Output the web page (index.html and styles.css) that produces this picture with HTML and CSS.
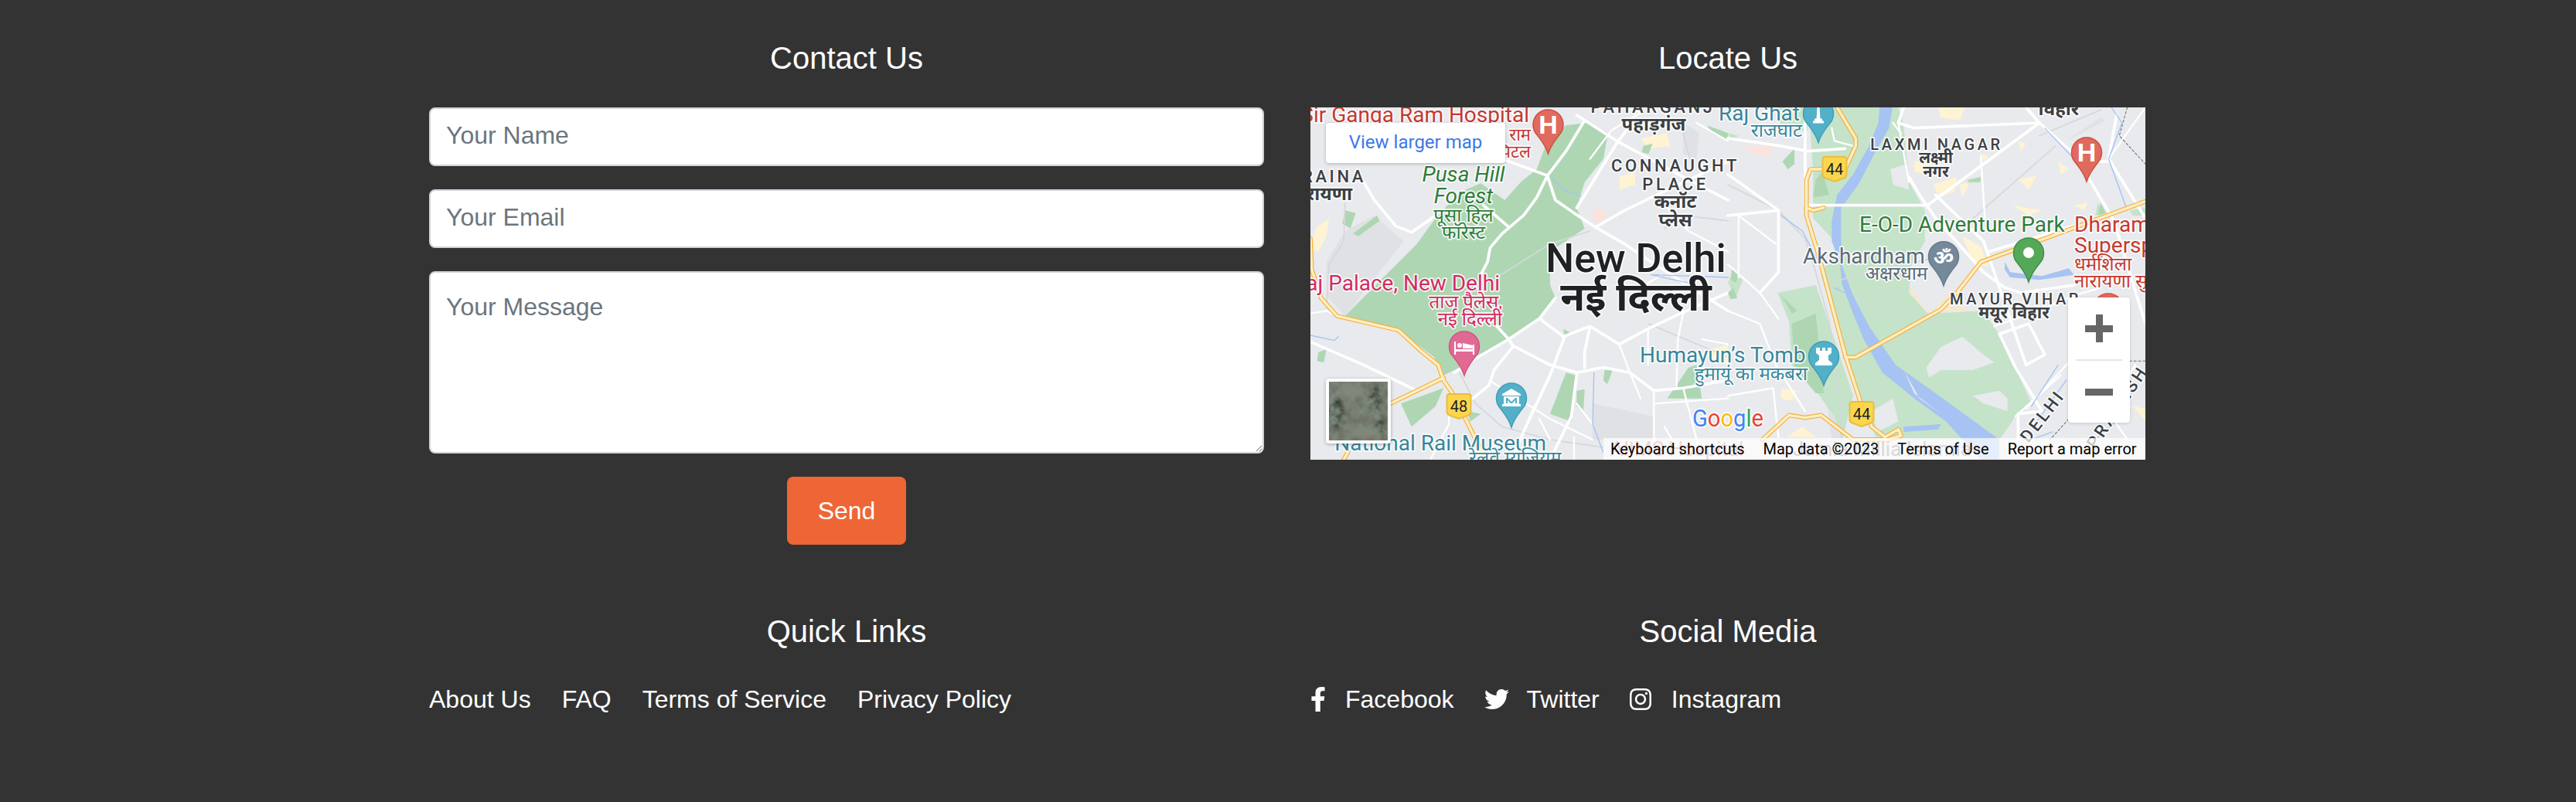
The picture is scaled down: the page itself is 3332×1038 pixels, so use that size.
FILE: index.html
```html
<!DOCTYPE html>
<html>
	<head>
		<meta charset="UTF-8">
		<title>Contact</title>
		<link rel="stylesheet" href="styles.css">
	</head>
	<body>
		<footer class="foot">
			<section class="col">
				<h3>Contact Us</h3>
				<form class="form">
					<input type="text" placeholder="Your Name">
					<input type="email" placeholder="Your Email">
					<textarea placeholder="Your Message"></textarea>
					<button type="button">Send</button>
				</form>
			</section>
			<section class="col">
				<h3>Locate Us</h3>
				<div class="map">
					<svg class="map-art" viewBox="0 0 1080 456" width="1080" height="456">
						<defs>
							<path id="pin" d="M0 38C-3 28-8 22-14 14A19.5 19.5 0 1 1 14 14C8 22 3 28 0 38Z"/>
							<path id="shield" d="M-12-16H12Q15.5-16 15.5-12V7Q15.5 10 12 11.5L0 16-12 11.5Q-15.5 10-15.5 7V-12Q-15.5-16-12-16Z"/>
						</defs>
						<rect class="land" width="1080" height="456"/>

						<!-- left half, coordinates read off the 540px wide crop -->
						<g transform="scale(.3444 .3333)">
							<path class="patch" d="M20 470L70 430 60 500 30 560 0 540ZM130 470L170 490 150 510ZM1160 270L1220 250 1220 300 1160 320ZM1240 120L1340 100 1350 150 1270 160ZM1500 940L1568 920 1568 1000 1500 980Z"/>
							<path class="shade" d="M60 600L130 480 240 420 350 520 130 810 60 730ZM1060 1150L1290 1200 1290 1290 1060 1290ZM1400 60L1460 100 1450 200 1400 180Z"/>
							<path class="pink" d="M1050 410L1085 385 1120 425 1075 450Z"/>
							<path class="park" d="M130 810L400 530 470 430 560 330 640 295 730 360 790 290 850 240 890 130 960 70 1040 60 1118 100 1100 200 1030 290 1000 390 1030 470 900 560 900 690 920 740 860 820 740 900 620 980 500 1040 465 970 330 865Z"/>
							<path class="park" d="M130 400L170 410 150 470 120 450ZM160 490L250 420 260 440 180 500ZM30 950L60 940 50 990 25 985ZM340 1150L500 1090 470 1160 380 1240ZM590 1180L640 1190 600 1220ZM950 860L985 880 955 890ZM960 1030L998 1040 980 1220 900 1190ZM1000 1100L1030 1095 1025 1180 1000 1160ZM1105 1020L1135 1020 1115 1075 1100 1060ZM1340 1130L1420 1010 1450 1000 1470 1130ZM1250 150L1285 140 1270 180 1245 175ZM1490 70L1568 100 1568 130 1510 100Z"/>
							<path class="rail" d="M700 660L900 530 1050 480M130 370L125 520 70 610 60 780M560 1030L620 1150 720 1240 900 1290 1100 1320M1270 840L1568 970M1330 470L1400 420 1568 440M1400 100L1430 220"/>
							<path class="road" d="M1030 50L960 170 890 265 850 350 800 420 720 490 675 545 665 600 640 650M890 265L920 360 990 410 1070 465 1180 530 1280 600 1400 680 1568 790M1070 465L1180 400 1300 340 1568 210M1000 390L1150 140 1200 70M1000 30L1150 130 1400 270 1568 360M920 740L860 820 745 900 620 975 540 1030M860 820L950 890 1050 850 1160 920 1268 860 1390 800 1568 720M745 900L760 925 900 1000 1000 1030 1100 1010 1200 1030 1290 1100 1400 1090 1568 1060M760 930L690 1020 670 1080 610 1130M955 890L900 1040 800 1260 760 1368M1000 1040L980 1200 900 1368M1050 850L1030 950 1030 1010M0 910L200 1000 400 1100M890 265L720 200 560 120M470 420L380 485 320 460 240 360 200 290M650 380L740 460M700 850L745 900"/>
							<path class="road thin" d="M0 800L60 790 100 810M680 1065L780 1130 900 1210 1060 1290M1160 920L1200 1030 1240 1130M1290 1100L1290 1368M1268 860L1268 1000M1400 800L1380 900 1375 1090M1470 900L1568 920M840 1160L800 1260M860 1210L900 1290M990 1280L990 1368 M1060 1230L1000 1150M1130 90L1240 20M1240 20L1190 0M1300 340L1420 480 1568 560M1320 650L1240 700M1400 1090L1470 1368M1290 1150L1568 1130M1130 90L1050 200M1450 60L1568 130M450 1368L520 1230 520 1170M1330 1240L1400 1368"/>
							<path class="brook" d="M1065 1030L1060 1230 1100 1340M0 885L90 905 105 890M1570 660L1280 650 1500 700M905 275L950 320 1015 345"/>
							<path class="hw-edge" d="M0 510L5 630 40 740 100 810 330 865 420 950 480 1000 500 1060 540 1120 640 1330 660 1368M500 1050L300 1150M140 1340L125 1368"/>
							<path class="hw" d="M0 510L5 630 40 740 100 810 330 865 420 950 480 1000 500 1060 540 1120 640 1330 660 1368M500 1050L300 1150M140 1340L125 1368"/>
						</g>

						<!-- right half -->
						<g transform="translate(540) scale(.3444 .3333)">
							<path class="patch" d="M790 0L890 0 870 50 800 40ZM700 210L760 220 740 260 700 250ZM770 300L860 270 850 330 790 340ZM870 300L910 290 880 350ZM950 180L980 190 960 210ZM1090 130L1120 140 1100 170ZM1240 210L1280 240 1250 260ZM1090 280L1160 265 1130 320ZM1070 380L1180 400 1130 420ZM1300 380L1350 370 1340 400ZM880 500L950 540 980 620 920 600ZM200 1090L260 1100 240 1140 200 1130ZM1520 1160L1568 1170 1568 1220ZM220 1280L280 1240 330 1280Z"/>
							<path class="sand" d="M680 690L760 800 900 790 830 720 750 810 690 750Z"/>
							<path class="pink" d="M60 150L170 145 160 190 90 180Z"/>
							<path class="shade" d="M1240 150L1400 40 1420 50 1270 130ZM330 760L410 1000 430 1290 390 1290 340 920Z"/>
							<path class="park-lt" d="M310 90L400 0 640 0 660 70 680 290 740 400 740 520 690 610 680 720 750 800 960 790 1010 870 1080 1010 1140 1150 1080 1200 1020 1290 560 1290 490 1120 410 860 350 650 410 530 320 430 320 260Z"/>
							<path class="park-lt" d="M187 720L330 690 400 900 470 1120 430 1290 400 1200 330 1100 240 1000 230 830Z"/>
							<path class="park-lt" d="M0 100L40 110 10 130ZM0 680L20 640 55 670 30 740ZM190 0L300 0 300 90 200 100ZM1510 400L1568 390 1568 420 1520 420ZM900 280L950 270 950 290 900 295ZM1390 370L1410 410 1380 420Z"/>
							<path class="land" d="M745 1010L800 930 880 890 960 960 1000 990 920 1020 800 1020 755 1050ZM920 1120L1020 1100 1050 1130 1050 1180 960 1150ZM620 1130L540 1180 560 1260 640 1220ZM610 240L670 220 680 320 620 300Z"/>
							<path class="park" d="M330 280L355 250 380 340 320 350ZM205 210L250 160 250 220 225 240ZM240 840L330 800 360 1110 330 1110 250 1010ZM200 730L260 790 240 800ZM0 720L20 700 35 740 10 745ZM900 285L950 270 945 290ZM1400 370L1420 410 1390 420ZM15 630L45 640 30 680 10 670Z"/>
							<path class="river" d="M570 0L618 0 605 80 550 180 490 300 425 390 425 500 430 620 470 730 530 850 630 1000 780 1110 900 1200 1020 1290 1020 1368 950 1368 820 1220 700 1130 580 1030 510 900 470 800 430 690 420 600 390 520 390 440 410 340 470 260 530 150 565 60ZM1040 600L1060 640 1180 655 1280 625 1300 650 1170 670 1060 660 1040 630ZM660 1240L800 1230 790 1250 660 1260Z"/>
							<path class="land" d="M660 1020L700 1110 800 1190 720 1130Z"/>
							<path class="rail" d="M0 300L190 400 290 510 330 640 380 830 420 1130 430 1368M360 690L520 640 750 590M740 830L900 860 1000 900M1170 110L1400 10M900 450L1230 150M490 480L640 470"/>
							<path class="road" d="M0 260L190 400 190 640 120 720M0 120L200 150 300 170 440 160M290 0L290 380M640 60L700 80 1170 60 1000 190 750 380 300 380M640 60L660 0M1170 60L1120 0M1170 60L1300 180 1450 440 1568 840M680 270L720 340 780 430 960 640M780 340L960 520 1120 1000 1190 960 1130 840 1020 880M1020 880L1080 1010 1180 1180 1090 1190 1090 1290M980 560L1300 460M1460 30L1430 200 1568 430M1380 210L1440 210M0 420L190 400M960 640L1040 700 1100 720 1300 690"/>
							<path class="road thin" d="M40 420L40 660M40 420L180 530M0 610L120 720 190 820M120 720L190 640M0 790L120 840 180 1000 290 1180M0 1120L170 1090 190 1280M390 80L400 130 470 150M950 190L965 430M620 60L650 100M1400 700L1300 730 1190 780 1000 850M680 290L640 60M1430 200L1568 0M1530 1000L1420 1170 1500 1290M1280 990L1120 1170M1250 1040L1080 1200"/>
							<path class="brook" d="M1440 0L1480 60 1430 200 1500 400M1190 80L1300 200M400 700L440 720M200 420L280 480 350 620M1240 1000L1140 1160M1270 1060L1160 1220M1220 1260L1140 1290M1500 1180L1380 1290"/>
							<path class="dash" d="M1500 0L1470 110 1568 220M1568 985L1480 985M1280 1210L1210 1290"/>
							<path class="hw-edge" d="M410 0L480 120 480 150 440 240 310 240 295 280 295 420 340 570 440 960 500 1150 540 1240 590 1280 640 1250 650 1275 600 1290M440 970L480 970 800 785 860 720 950 600 1070 555 1568 365M295 390L320 400 360 390M130 1290L230 1195 290 1205 350 1195 470 1290 600 1290"/>
							<path class="hw" d="M410 0L480 120 480 150 440 240 310 240 295 280 295 420 340 570 440 960 500 1150 540 1240 590 1280 640 1250 650 1275 600 1290M440 970L480 970 800 785 860 720 950 600 1070 555 1568 365M295 390L320 400 360 390M130 1290L230 1195 290 1205 350 1195 470 1290 600 1290"/>
						</g>

						<!-- labels -->
						<text class="lb red s28 end" x="283" y="19">Sir Ganga Ram Hospital</text>
						<text class="lb red s22 end" x="285" y="43">सर गंगा राम</text>
						<text class="lb red s22 end" x="285" y="65">हॉस्पिटल</text>
						<text class="lb area s22 end" x="72" y="97">SARAINA</text>
						<text class="lb dark s24 end" x="54" y="120">नारायणा</text>
						<text class="lb green s28 mid ital" x="198" y="96">Pusa Hill</text>
						<text class="lb green s28 mid ital" x="198" y="124">Forest</text>
						<text class="lb green s24 mid" x="198" y="148">पूसा हिल</text>
						<text class="lb green s24 mid" x="198" y="170">फॉरेस्ट</text>
						<text class="lb area s22 mid" x="443" y="7">PAHARGANJ</text>
						<text class="lb dark s24 mid" x="444" y="30">पहाड़गंज</text>
						<text class="lb area s22 mid" x="472" y="83">CONNAUGHT</text>
						<text class="lb area s22 mid" x="472" y="107">PLACE</text>
						<text class="lb dark s24 mid" x="472" y="130">कनॉट</text>
						<text class="lb dark s24 mid" x="472" y="154">प्लेस</text>
						<text class="lb city mid" x="421" y="213">New Delhi</text>
						<text class="lb city-hi mid" x="421" y="263">नई दिल्ली</text>
						<text class="lb pink-t s28 end" x="245" y="237">Taj Palace, New Delhi</text>
						<text class="lb pink-t s24 end" x="248" y="260">ताज पैलेस,</text>
						<text class="lb pink-t s24 end" x="248" y="282">नई दिल्ली</text>
						<text class="lb teal s28 end" x="305" y="444">National Rail Museum</text>
						<text class="lb teal s24 mid" x="265" y="462">रेलवे म्यूज़ियम</text>
						<text class="lb teal s28" x="426" y="330">Humayun’s Tomb</text>
						<text class="lb teal s24 end" x="643" y="353">हुमायूं का मकबरा</text>
						<text class="lb teal s28 end" x="633" y="17">Raj Ghat</text>
						<text class="lb teal s24 mid" x="603" y="38">राजघाट</text>
						<text class="lb dark s24 mid" x="968" y="10">विहार</text>
						<text class="lb area s20 mid" x="810" y="55">LAXMI NAGAR</text>
						<text class="lb dark s20 mid" x="809" y="72">लक्ष्मी</text>
						<text class="lb dark s20 mid" x="809" y="90">नगर</text>
						<text class="lb green s28" x="710" y="161">E-O-D Adventure Park</text>
						<text class="lb red s28" x="988" y="161">Dharamshila</text>
						<text class="lb red s28" x="988" y="188">Superspeciality</text>
						<text class="lb red s24" x="988" y="211">धर्मशिला</text>
						<text class="lb red s24" x="988" y="233">नारायणा सुपर</text>
						<text class="lb slate s28" x="637" y="202">Akshardham</text>
						<text class="lb slate s24 mid" x="758" y="223">अक्षरधाम</text>
						<text class="lb area s20 mid" x="912" y="255">MAYUR VIHAR</text>
						<text class="lb dark s22 mid" x="910" y="273">मयूर विहार</text>
						<text class="lb area s22 mid" transform="translate(953 404) rotate(-52)">DELHI</text>
						<text class="lb area s22 mid" transform="translate(1050 392) rotate(-56)">PRADESH</text>
						<text class="lb ghost-r s26" x="388" y="451">AIIMS Hospital</text>
						<text class="lb ghost-g s26" x="624" y="451">Jamia Millia Islamia</text>
						<text class="lb google" x="494" y="413" textLength="92" lengthAdjust="spacingAndGlyphs"><tspan class="g-b">G</tspan><tspan class="g-r">o</tspan><tspan class="g-y">o</tspan><tspan class="g-b">g</tspan><tspan class="g-g">l</tspan><tspan class="g-r">e</tspan></text>

						<!-- shields -->
						<g transform="translate(678 80)"><use class="shield" href="#shield"/><text class="shield-t" y="7">44</text></g>
						<g transform="translate(713 397)"><use class="shield" href="#shield"/><text class="shield-t" y="7">44</text></g>
						<g transform="translate(192 387)"><use class="shield" href="#shield"/><text class="shield-t" y="7">48</text></g>

						<!-- pins -->
						<g transform="translate(307.5 22)"><use class="pin p-red" href="#pin"/><text class="pin-h" y="12">H</text></g>
						<g transform="translate(1004 58)"><use class="pin p-red" href="#pin"/><text class="pin-h" y="12">H</text></g>
						<g transform="translate(1032 260)"><use class="pin p-red" href="#pin"/></g>
						<g transform="translate(657 7.5)"><use class="pin p-teal" href="#pin"/><path class="pin-i" d="M-1.5-8H1.5L2.5 7H5V10H7V13H-7V10H-5V7H-2.5Z"/></g>
						<g transform="translate(819 192.700)"><use class="pin p-slate" href="#pin"/><text class="pin-om" y="10">ॐ</text></g>
						<g transform="translate(929 188)"><use class="pin p-green" href="#pin"/><circle class="pin-i" r="7"/></g>
						<g transform="translate(199 309)"><use class="pin p-pink" href="#pin"/><path class="pin-i" d="M-13-6H-11V4H11V-2H13V11H11V7H-11V11H-13ZM-9-1A3 3 0 1 1-3-1 3 3 0 1 1-9-1ZM-2-4L11-1V3H-2Z"/></g>
						<g transform="translate(260 376)"><use class="pin p-teal" href="#pin"/><path class="pin-i" d="M0-12L12-5V-3H-12V-5ZM-10-2H10V8H12V11H-12V8H-10ZM-7 0V7H-5V3L-1 7H1L5 3V7H7V0H5L0 5-5 0Z"/></g>
						<g transform="translate(664 322)"><use class="pin p-teal" href="#pin"/><path class="pin-i" d="M-10-11H-5V-7H-2V-11H2V-7H5V-11H10V-4L6-1V5L11 9V12H-11V9L-6 5V-1L-10-4Z"/></g>
					</svg>

					<a class="map-link">View larger map</a>
					<div class="map-thumb">
						<svg viewBox="0 0 76 76" width="76" height="76">
							<defs>
								<filter id="blot"><feGaussianBlur stdDeviation="3"/></filter>
								<filter id="grain" x="0" y="0" width="100%" height="100%">
									<feTurbulence type="fractalNoise" baseFrequency=".09" numOctaves="4" seed="7"/>
									<feColorMatrix values="0 0 0 0 .2  0 0 0 0 .25  0 0 0 0 .2  2.4 0 0 0 -.7"/>
								</filter>
							</defs>
							<rect class="thumb-base" width="76" height="76"/>
							<g filter="url(#blot)">
								<ellipse class="thumb-dark" cx="10" cy="40" rx="9" ry="20"/>
								<ellipse class="thumb-dark" cx="60" cy="22" rx="7" ry="16"/>
								<ellipse class="thumb-dark" cx="66" cy="56" rx="5" ry="11"/>
								<ellipse class="thumb-lite" cx="30" cy="12" rx="16" ry="8"/>
								<ellipse class="thumb-lite" cx="46" cy="66" rx="18" ry="6"/>
							</g>
							<rect width="76" height="76" filter="url(#grain)"/>
						</svg>
					</div>
					<div class="map-zoom">
						<span class="z-btn"><i class="z-h"></i><i class="z-v"></i></span>
						<span class="z-line"></span>
						<span class="z-btn"><i class="z-h"></i></span>
					</div>
					<div class="map-attr">
						<span>Keyboard shortcuts</span>
						<span>Map data ©2023</span>
						<span>Terms of Use</span>
						<span>Report a map error</span>
					</div>
				</div>
			</section>

			<section class="col">
				<h3>Quick Links</h3>
				<ul class="links">
					<li><a>About Us</a></li>
					<li><a>FAQ</a></li>
					<li><a>Terms of Service</a></li>
					<li><a>Privacy Policy</a></li>
				</ul>
			</section>
			<section class="col">
				<h3>Social Media</h3>
				<ul class="links social">
					<li><a class="soc"><svg viewBox="0 0 320 512" preserveAspectRatio="xMinYMid" width="22" height="32"><path d="M279.14 288l14.22-92.66h-88.91v-60.13c0-25.35 12.42-50.06 52.24-50.06h40.42V6.26S260.43 0 225.36 0c-73.22 0-121.08 44.38-121.08 124.72v70.62H22.89V288h81.39v224h100.17V288z"/></svg>Facebook</a></li>
					<li><a class="soc"><svg viewBox="0 0 512 512" width="32" height="32"><path d="M459.37 151.716c.325 4.548.325 9.097.325 13.645 0 138.72-105.583 298.558-298.558 298.558-59.452 0-114.68-17.219-161.137-47.106 8.447.974 16.568 1.299 25.34 1.299 49.055 0 94.213-16.568 130.274-44.832-46.132-.975-84.792-31.188-98.112-72.772 6.498.974 12.995 1.624 19.818 1.624 9.421 0 18.843-1.3 27.614-3.573-48.081-9.747-84.143-51.98-84.143-102.985v-1.299c13.969 7.797 30.214 12.67 47.431 13.319-28.264-18.843-46.781-51.005-46.781-87.391 0-19.492 5.197-37.36 14.294-52.954 51.655 63.675 129.3 105.258 216.365 109.807-1.624-7.797-2.599-15.918-2.599-24.04 0-57.828 46.782-104.934 104.934-104.934 30.213 0 57.502 12.67 76.67 33.137 23.715-4.548 46.456-13.32 66.599-25.34-7.798 24.366-24.366 44.833-46.132 57.827 21.117-2.273 41.584-8.122 60.426-16.243-14.292 20.791-32.161 39.308-52.628 54.253z"/></svg>Twitter</a></li>
					<li><a class="soc"><svg viewBox="0 0 448 512" preserveAspectRatio="xMinYMid" width="31" height="32"><path d="M224.1 141c-63.6 0-114.9 51.3-114.9 114.9s51.3 114.9 114.9 114.9S339 319.5 339 255.9 287.7 141 224.1 141zm0 189.6c-41.1 0-74.7-33.5-74.7-74.7s33.5-74.7 74.7-74.7 74.7 33.5 74.7 74.7-33.6 74.7-74.7 74.7zm146.4-194.3c0 14.9-12 26.8-26.8 26.8-14.9 0-26.8-12-26.8-26.8s12-26.8 26.8-26.8 26.8 12 26.8 26.8zm76.1 27.2c-1.7-35.9-9.9-67.7-36.2-93.9-26.2-26.2-58-34.4-93.9-36.2-37-2.1-147.9-2.1-184.9 0-35.8 1.7-67.6 9.9-93.9 36.1s-34.4 58-36.2 93.9c-2.1 37-2.1 147.9 0 184.9 1.7 35.9 9.9 67.7 36.2 93.9s58 34.4 93.9 36.2c37 2.1 147.9 2.1 184.9 0 35.9-1.7 67.7-9.9 93.9-36.2 26.2-26.2 34.4-58 36.2-93.9 2.1-37 2.1-147.8 0-184.8zM398.8 388c-7.8 19.6-22.9 34.7-42.6 42.6-29.5 11.7-99.5 9-132.1 9s-102.7 2.6-132.1-9c-19.6-7.8-34.7-22.9-42.6-42.6-11.7-29.5-9-99.5-9-132.1s-2.6-102.7 9-132.1c7.8-19.6 22.9-34.7 42.6-42.6 29.5-11.7 99.5-9 132.1-9s102.7-2.6 132.1 9c19.6 7.8 34.7 22.9 42.6 42.6 11.7 29.5 9 99.5 9 132.1s2.7 102.7-9 132.1z"/></svg>Instagram</a></li>
				</ul>
			</section>
		</footer>
	</body>
</html>
```

FILE: styles.css
```css
* {
	box-sizing: border-box;
}
html, body {
	margin: 0;
	min-height: 1038px;
	background: #333333;
}
body {
	color: #ffffff;
	font: 32px/48px "Liberation Sans", Arial, sans-serif;
}
.foot {
	width: 2220px;
	margin-left: 555px;
	padding-top: 51px;
	display: grid;
	grid-template-columns: 1080px 1080px;
	column-gap: 60px;
	row-gap: 88px;
}
h3 {
	margin: 0 0 40px;
	font-size: 40px;
	font-weight: 400;
	line-height: 48px;
	text-align: center;
}

/* form */
.form {
	display: flex;
	flex-direction: column;
	gap: 30px;
}
input, textarea {
	display: block;
	width: 100%;
	background: #ffffff;
	border: 2px solid #ced4da;
	border-radius: 8px;
	color: #495057;
	font: 32px/48px "Liberation Sans", Arial, sans-serif;
	outline: none;
}
input {
	height: 76px;
	padding: 10px 20px 14px;
}
textarea {
	height: 236px;
	padding: 20px;
	resize: vertical;
}
input::placeholder, textarea::placeholder {
	color: #6c757d;
	opacity: 1;
}
button {
	align-self: center;
	width: 154px;
	height: 88px;
	padding: 0;
	background: #ee6636;
	border: 0;
	border-radius: 8px;
	color: #ffffff;
	font: 32px/48px "Liberation Sans", Arial, sans-serif;
}

/* links */
.links {
	margin: 0;
	padding: 0;
	list-style: none;
	display: flex;
	gap: 40px;
}
.social {
	gap: 39px;
}
.soc {
	display: flex;
	align-items: center;
	gap: 23px;
}
.soc svg {
	fill: #ffffff;
	flex: none;
}

/* map */
.map {
	position: relative;
	width: 1080px;
	height: 456px;
	overflow: hidden;
	font-family: Roboto, "Noto Sans", sans-serif;
}
.map-art {
	display: block;
}
.land { fill: #e8eaed; }
.park { fill: #aed6b3; }
.park-lt { fill: #c4e3c9; }
.river { fill: #a6c3f3; }
.patch { fill: #fef3d2; }
.sand { fill: #f3e8d3; }
.pink { fill: #fbe3dd; }
.shade { fill: #dfe1e5; }
.road, .road.thin, .rail, .brook, .dash, .hw, .hw-edge {
	fill: none;
	stroke-linejoin: round;
	stroke-linecap: round;
}
.road { stroke: #ffffff; stroke-width: 11; }
.road.thin { stroke-width: 7; }
.rail { stroke: #d5d7db; stroke-width: 5; }
.brook { stroke: #a6c3f3; stroke-width: 4; }
.dash { stroke: #6a6d72; stroke-width: 3; stroke-dasharray: 9 8; }
.hw-edge { stroke: #f4b13d; stroke-width: 17; }
.hw { stroke: #feeec2; stroke-width: 10; }

.lb {
	paint-order: stroke;
	stroke: rgba(255, 255, 255, .85);
	stroke-width: 3.5px;
	stroke-linejoin: round;
	font-family: Roboto, "Noto Sans", sans-serif;
}
.s20 { font-size: 20px; }
.s22 { font-size: 22px; }
.s24 { font-size: 24px; }
.s26 { font-size: 26px; }
.s28 { font-size: 28px; }
.mid { text-anchor: middle; }
.end { text-anchor: end; }
.ital { font-style: italic; }
.red { fill: #c5392f; }
.green { fill: #2f7d3a; }
.teal { fill: #37879a; }
.slate { fill: #5c6b79; }
.pink-t { fill: #d42a64; }
.dark { fill: #3c4043; font-weight: 700; }
.area { fill: #3c4043; font-weight: 500; letter-spacing: 3.6px; }
.city {
	fill: #202124;
	font-size: 52px;
	font-weight: 500;
}
.city-hi {
	fill: #202124;
	font-size: 52px;
	font-weight: 700;
}
.ghost-r { fill: #d2665c; stroke: none; }
.ghost-g { fill: #70757a; stroke: none; }
.google { font-size: 32px; font-weight: 400; }
.g-b { fill: #4285f4; }
.g-r { fill: #ea4335; }
.g-y { fill: #fbbc05; }
.g-g { fill: #34a853; }

.shield { fill: #fbd64c; stroke: #e9bd43; stroke-width: 2; }
.shield-t {
	fill: #202124;
	font: 20px Roboto, sans-serif;
	text-anchor: middle;
}
.pin { stroke-width: 1.5; }
.p-red { fill: #e06a5e; stroke: #cf4d40; }
.p-teal { fill: #53b0c9; stroke: #3f9db6; }
.p-slate { fill: #74899a; stroke: #667a8b; }
.p-green { fill: #55a858; stroke: #3f8f43; }
.p-pink { fill: #e16a94; stroke: #d0527f; }
.pin-i { fill: #ffffff; fill-rule: evenodd; }
.pin-h {
	fill: #ffffff;
	font: 700 34px "Liberation Sans", sans-serif;
	text-anchor: middle;
}
.pin-om {
	fill: #ffffff;
	font: 700 26px Roboto, "Noto Sans", sans-serif;
	text-anchor: middle;
}

.map-link {
	position: absolute;
	left: 20px;
	top: 20px;
	width: 232px;
	height: 52px;
	background: #ffffff;
	border-radius: 4px;
	box-shadow: 0 1px 4px rgba(0, 0, 0, .25);
	color: #3b78e7;
	font-size: 24px;
	line-height: 50px;
	text-align: center;
}
.map-thumb {
	position: absolute;
	left: 20px;
	top: 351px;
	width: 84px;
	height: 84px;
	border: 4px solid #ffffff;
	border-radius: 4px;
	box-shadow: 0 1px 4px rgba(0, 0, 0, .3);
	overflow: hidden;
}
.map-thumb svg {
	display: block;
}
.thumb-base { fill: #6f7165; }
.thumb-dark { fill: #343f36; }
.thumb-lite { fill: #8a877b; }
.map-zoom {
	position: absolute;
	left: 980px;
	top: 246px;
	width: 80px;
	height: 162px;
	background: #ffffff;
	border-radius: 4px;
	box-shadow: 0 1px 4px rgba(0, 0, 0, .15);
	display: flex;
	flex-direction: column;
	align-items: center;
}
.z-btn {
	position: relative;
	width: 80px;
	height: 80px;
}
.z-line {
	width: 60px;
	height: 2px;
	background: #e6e6e6;
}
.z-h, .z-v {
	position: absolute;
	background: #666666;
}
.z-h {
	left: 22px;
	top: 36px;
	width: 36px;
	height: 9px;
}
.z-v {
	left: 36px;
	top: 22px;
	width: 9px;
	height: 36px;
}
.map-attr {
	position: absolute;
	left: 379px;
	right: 0;
	bottom: 0;
	height: 28px;
	padding-left: 9px;
	background: rgba(255, 255, 255, .72);
	color: #000000;
	font-size: 20px;
	line-height: 28px;
	display: flex;
	gap: 24px;
	white-space: nowrap;
}
```
